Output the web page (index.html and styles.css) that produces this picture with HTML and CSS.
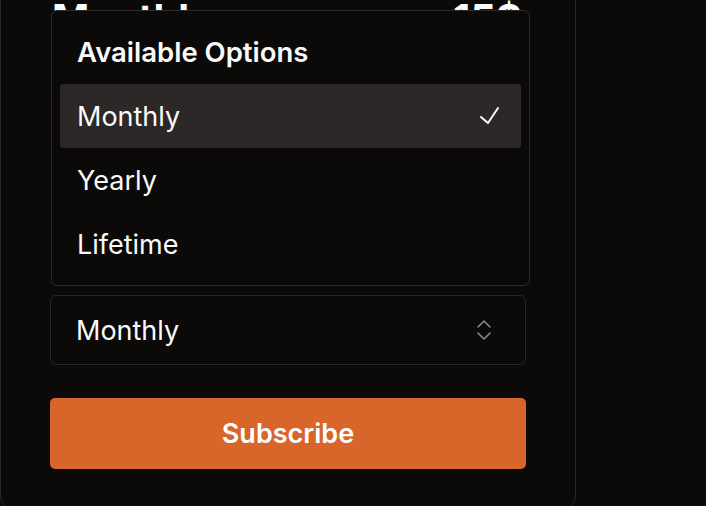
FILE: index.html
```html
<!DOCTYPE html>
<html lang="en">
<head>
<meta charset="utf-8">
<title>Subscribe</title>
<link rel="stylesheet" href="styles.css">
</head>
<body>
<div class="card">
  <div class="plan-head">
    <span class="plan-name">Monthly</span>
    <span class="plan-price">15$</span>
  </div>
  <div class="select">
    <span class="select-value">Monthly</span>
    <svg class="chevrons" width="14" height="20" viewBox="0 0 14 20" aria-hidden="true">
      <polyline points="1,7 7,1 13,7" />
      <polyline points="1,13 7,19 13,13" />
    </svg>
  </div>
  <button class="subscribe">Subscribe</button>
  <div class="popup">
    <div class="popup-label">Available Options</div>
    <div class="option selected">
      <span>Monthly</span>
      <svg class="check" width="22" height="20" viewBox="0 0 22 20" aria-hidden="true">
        <polyline points="2,11 9,17 19,2" />
      </svg>
    </div>
    <div class="option"><span>Yearly</span></div>
    <div class="option"><span>Lifetime</span></div>
  </div>
</div>
</body>
</html>
```

FILE: styles.css
```css
* { box-sizing: border-box; }

html, body {
  margin: 0;
  background: #0b0a09;
  overflow: hidden;
}

body {
  font-family: Inter, "Noto Sans", "Liberation Sans", sans-serif;
  color: #fafafa;
  width: 706px;
  height: 506px;
}

.card {
  position: relative;
  width: 576px;
  margin-top: -40px;
  padding: 36px 49px 40px;
  border: 1px solid #2a2826;
  border-radius: 14px;
  background: #0b0a09;
}

.plan-head {
  display: flex;
  justify-content: space-between;
  align-items: baseline;
  height: 44px;
  line-height: 44px;
  font-size: 40px;
  font-weight: 700;
  padding: 0 4px 0 2px;
}

.select {
  margin-top: 254px;
  height: 70px;
  border: 1px solid #2a2826;
  border-radius: 6px;
  display: flex;
  align-items: center;
  justify-content: space-between;
  padding: 0 34px 0 25px;
  font-size: 27px;
}

.chevrons polyline {
  fill: none;
  stroke: #8a8886;
  stroke-width: 1.6;
  stroke-linecap: round;
  stroke-linejoin: round;
}

.subscribe {
  display: block;
  width: 100%;
  margin-top: 33px;
  height: 71px;
  border: none;
  border-radius: 5px;
  background: #d8652a;
  color: #fff;
  font-family: inherit;
  font-size: 27px;
  font-weight: 600;
}

.popup {
  position: absolute;
  left: 50px;
  top: 49px;
  width: 479px;
  padding: 8px 8px 9px;
  border: 1px solid #2e2c2a;
  border-radius: 6px;
  background: #0b0a09;
}

.popup-label {
  height: 65px;
  display: flex;
  align-items: center;
  padding-left: 17px;
  font-size: 27.5px;
  font-weight: 600;
}

.option {
  height: 64px;
  display: flex;
  align-items: center;
  justify-content: space-between;
  padding: 0 20px 0 17px;
  font-size: 27px;
  border-radius: 3px;
}

.option.selected {
  background: #2b2827;
}

.check polyline {
  fill: none;
  stroke: #fafafa;
  stroke-width: 2;
  stroke-linecap: round;
  stroke-linejoin: round;
}
```
